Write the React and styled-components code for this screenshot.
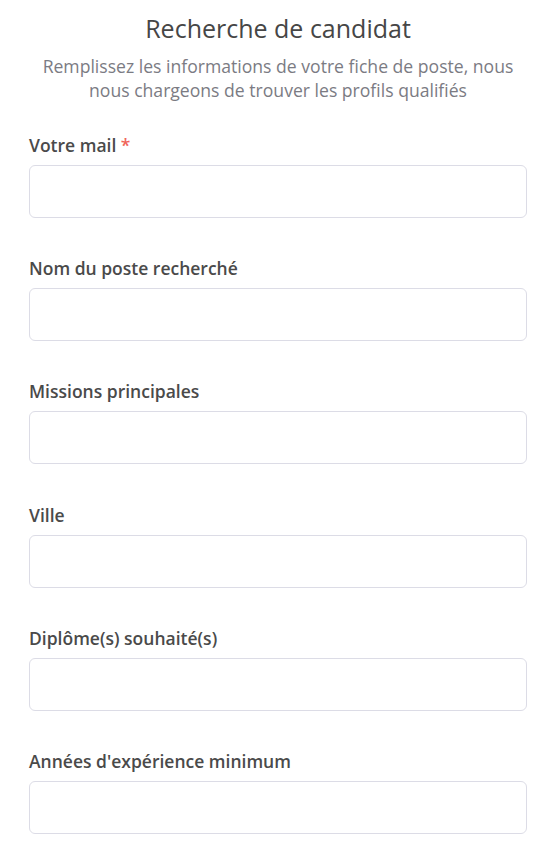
import styled, { createGlobalStyle } from 'styled-components';

const GlobalStyle = createGlobalStyle`
  body {
    margin: 0;
    background: #fff;
    font-family: "Open Sans", "Noto Sans", sans-serif;
  }
`;

const Page = styled.div`
  padding: 12px 30px 0 29px;
`;

const Header = styled.header`
  text-align: center;
  margin-bottom: 31px;
`;

const Title = styled.h1`
  margin: 0 0 10px;
  font-size: 25px;
  line-height: 32px;
  font-weight: 400;
  color: #464646;
`;

const Subtitle = styled.p`
  margin: 0;
  font-size: 17.6px;
  line-height: 24px;
  color: #7b7b83;
`;

const Form = styled.form`
  display: flex;
  flex-direction: column;
  gap: 38.2px;
`;

const Field = styled.div`
  display: flex;
  flex-direction: column;
  gap: 8px;
`;

const Label = styled.label`
  font-size: 17.5px;
  line-height: 24px;
  font-weight: 600;
  color: #4a4a4a;
`;

const Required = styled.span`
  color: #f0645a;
`;

const Input = styled.input`
  box-sizing: border-box;
  width: 100%;
  height: 53px;
  border: 1px solid #dcdce6;
  border-radius: 6px;
  padding: 0 14px;
  font-family: inherit;
  font-size: 16px;
  outline: none;
`;

const fields = [
  { label: 'Votre mail', required: true, type: 'email' },
  { label: 'Nom du poste recherché' },
  { label: 'Missions principales' },
  { label: 'Ville' },
  { label: 'Diplôme(s) souhaité(s)' },
  { label: "Années d'expérience minimum" },
];

const App = () => (
  <Page>
    <GlobalStyle />
    <Header>
      <Title>Recherche de candidat</Title>
      <Subtitle>
        Remplissez les informations de votre fiche de poste, nous nous chargeons de
        trouver les profils qualifiés
      </Subtitle>
    </Header>
    <Form>
      {fields.map((f) => (
        <Field key={f.label}>
          <Label>
            {f.label}
            {f.required && <Required> *</Required>}
          </Label>
          <Input type={f.type || 'text'} />
        </Field>
      ))}
    </Form>
  </Page>
);

export default App;
